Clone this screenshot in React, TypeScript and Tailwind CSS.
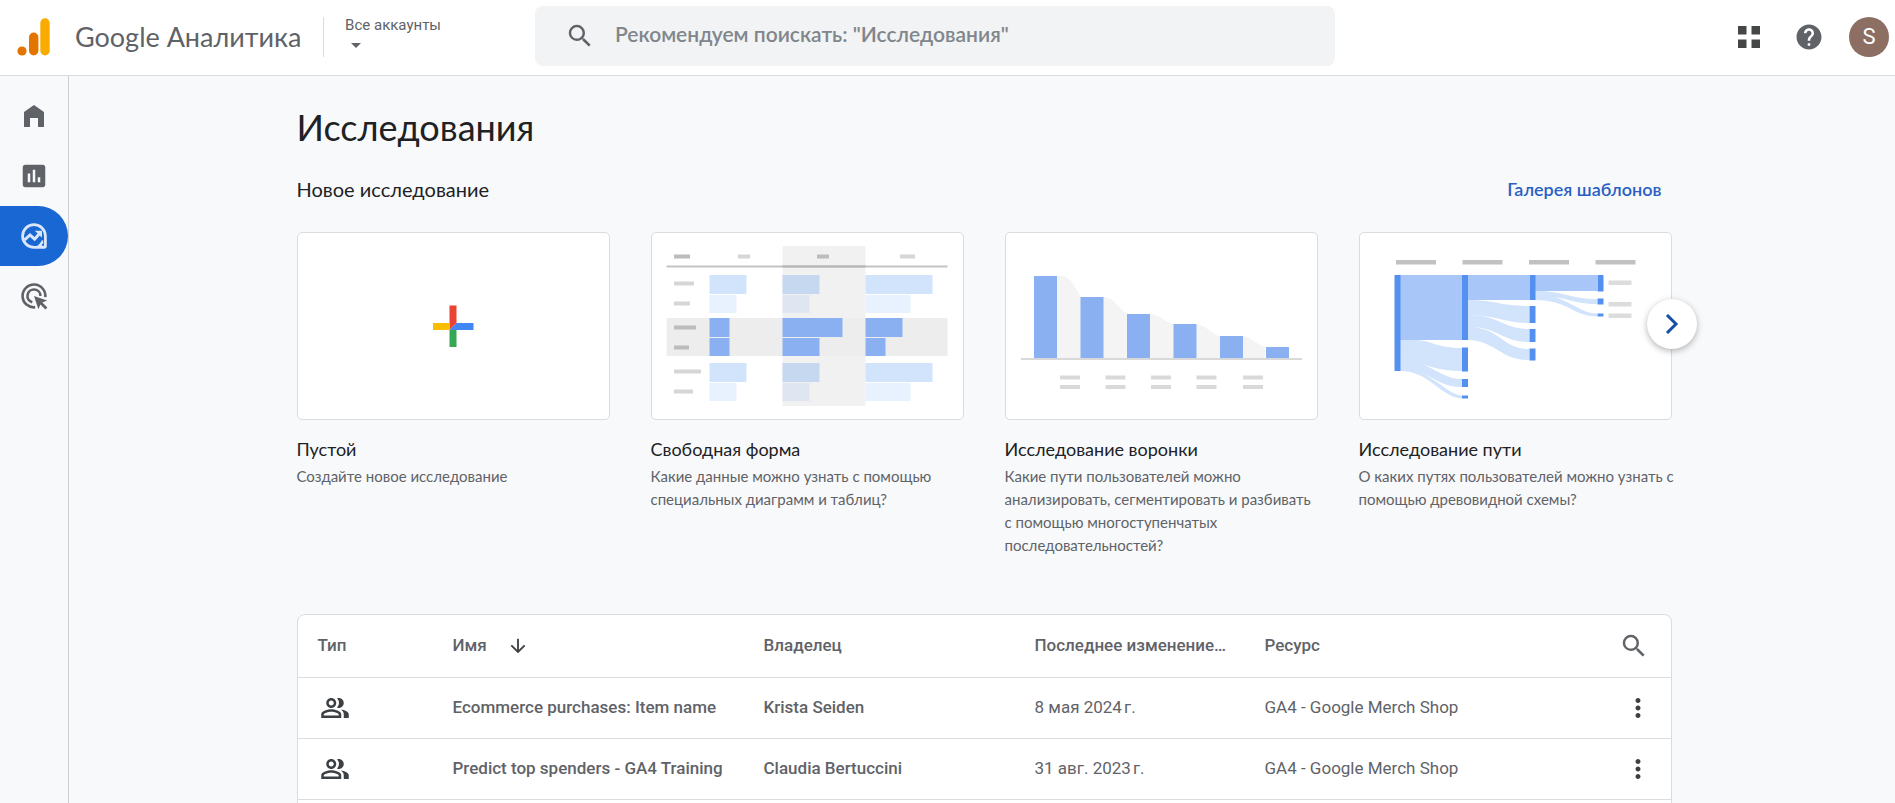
import React from "react";
import {
  MdArrowDownward,
  MdArrowDropDown,
  MdHelp,
  MdInsertChart,
  MdMoreVert,
  MdOutlinePeopleAlt,
  MdSearch,
} from "react-icons/md";

function AnalyticsLogo() {
  return (
    <svg width="34" height="38" viewBox="0 0 34 38" aria-hidden="true">
      <circle cx="5" cy="33" r="4.6" fill="#e37400" />
      <rect x="12" y="14.5" width="9.4" height="23" rx="4.7" fill="#e37400" />
      <rect x="23.3" y="0.3" width="9.4" height="37.2" rx="4.7" fill="#f9ab00" />
    </svg>
  );
}

function HomeIcon() {
  return (
    <svg width="30" height="30" viewBox="0 0 30 30" fill="currentColor" aria-hidden="true">
      <path d="M5 11 15 4l10 7v15h-6v-9h-8v9H5z" />
    </svg>
  );
}

function ExploreIcon() {
  return (
    <svg width="30" height="30" viewBox="0 0 30 30" fill="none" stroke="currentColor" aria-hidden="true">
      <path d="M15 3.600a11.400 11.400 0 1 0 0 22.800h10.200a1.200 1.200 0 0 0 1.200-1.200V15A11.400 11.400 0 0 0 15 3.600z" strokeWidth="2.800" />
      <path d="M23.500 19.500v6.500h-6.500c3-1 5.300-3.500 6.500-6.500z" fill="currentColor" strokeWidth="1.500" />
      <circle cx="23.800" cy="23.800" r="1" fill="#1967d2" stroke="none" />
      <path d="m5.500 19 5.500-5 4.600 4.200 5-5.700" strokeWidth="3" />
      <path d="M15.800 9.800h7.200v7z" fill="currentColor" stroke="none" />
    </svg>
  );
}

function AdsIcon() {
  return (
    <svg width="30" height="30" viewBox="0 0 30 30" fill="none" stroke="currentColor" strokeWidth="2.600" aria-hidden="true">
      <path d="M26.300 16.200A11.400 11.400 0 1 0 16.200 26.300" />
      <path d="M21.500 15a6.500 6.500 0 1 0-8.200 6.300" />
      <path d="m15 15 13.200 4.500-4.800 2 5 5-2 2-5-5-2 4.800z" fill="currentColor" stroke="none" />
    </svg>
  );
}

function PlusArt() {
  return (
    <svg viewBox="0 0 311 186" className="block w-full" aria-hidden="true">
      <path d="M151.500 72.500h7V90l-7 7z" fill="#ea4335" />
      <path d="M135 90h16.500v7H135z" fill="#fbbc04" />
      <path d="M151.500 97h7v17h-7z" fill="#34a853" />
      <path d="M158.500 90h17v7h-24z" fill="#4285f4" />
    </svg>
  );
}

function FreeFormArt() {
  return (
    <svg viewBox="0 0 311 186" className="block w-full" aria-hidden="true">
      <path d="M130.500 13h83v160h-83z" fill="#f1f1f1" />
      <path d="M14.500 85h281v38h-281z" fill="#ededed" />
      <path d="M14.500 32.500h281v2h-281z" fill="#c4c4c4" />
      <path d="M130.500 32.500h83v2h-83z" fill="#b5b5b5" />
      <path d="M22 21.500h16v4H22zM165 21.500h12v4h-12zM22 92.500h22v4H22zM22 112.500h15v4H22z" fill="#bcbcbc" />
      <path d="M86 21.500h12v4H86zM248 21.500h15v4h-15zM22 48.500h20v4H22zM22 68.500h16v4H22zM22 136.500h27v4H22zM22 156.500h19v4H22z" fill="#d6d6d6" />
      <path d="M57.500 42h37v19h-37zM213.500 42h67v19h-67zM57.500 130h37v19h-37zM213.500 130h67v19h-67z" fill="#d2e3fc" />
      <path d="M57.500 62h27v18h-27zM213.500 62h45v18h-45zM57.500 150h27v18h-27zM213.500 150h45v18h-45z" fill="#e8f1fe" />
      <path d="M130.500 42h37v19h-37zM130.500 130h37v19h-37z" fill="#c6d7f0" />
      <path d="M130.500 62h27v18h-27zM130.500 150h27v18h-27z" fill="#dfe6f2" />
      <path d="M57.500 85h20v19h-20zM57.500 105h20v18h-20zM130.500 85h60v19h-60zM130.500 105h37v18h-37zM213.500 85h37v19h-37zM213.500 105h20v18h-20z" fill="#8ab0f2" />
    </svg>
  );
}

function FunnelArt() {
  return (
    <svg viewBox="0 0 311 186" className="block w-full" aria-hidden="true">
      <path
        d="M51 43h5c8 0 14 12 19 21h22c11 0 14 10 24 17h22c10 0 14 7 24 10h22c11 0 14 9 24 12h22c11 0 14 8 24 11v12H51z"
        fill="#f4f4f4"
      />
      <path d="M28 43h23v82H28zM74.500 64h23v61h-23zM121 81h23v44h-23zM167.500 91h23v34h-23zM214 103h23v22h-23zM260 114h23v11h-23z" fill="#8ab0f2" />
      <path d="M15 125h281v2H15z" fill="#d9d9d9" />
      <path d="M54 142.500h20v4H54zM99.500 142.500h20v4h-20zM145 142.500h20v4h-20zM190.500 142.500h20v4h-20zM237 142.500h20v4h-20zM54 152h20v4H54zM99.500 152h20v4h-20zM145 152h20v4h-20zM190.500 152h20v4h-20zM237 152h20v4h-20z" fill="#d9d9d9" />
    </svg>
  );
}

function PathArt() {
  return (
    <svg viewBox="0 0 311 186" className="block w-full" aria-hidden="true">
      <path d="M40 107h16c18 1 20 8 46 8v23c-22 0-28-4-42-7 16 4 24 15 42 15v8c-22 0-28-11-42-14 17 5 27 21 42 22.500v3C80 164 70 138 40 138z" fill="#d2e3fc" />
      <path d="M108 67c28 0 32 6 61 6v17c-24 0-33-8-61-8 32 0 34 14 61 14v13c-27 0-30-15-61-15 32 0 34 22 61 22v11c-29 0-33-19-61-20z" fill="#d2e3fc" />
      <path d="M175 58c30 0 35 8 62 8v5c-24 0-31-7-50-7.500 20 0 32 17 50 17v3c-24 0-27-16-62-16.500z" fill="#d2e3fc" />
      <path d="M40 42h62v65H40zM108 42h61v25h-61zM175 42h62v16h-62z" fill="#a8c6f8" />
      <path d="M34.500 42h6v96h-6zM102 42h6v65h-6zM102 114.500h6v24h-6zM102 146h6v8h-6zM102 162.500h6v3h-6zM169.500 42h6v25h-6zM169.500 73h6v17h-6zM169.500 96h6v13h-6zM169.500 115.500h6v12h-6zM237.500 42h6v16.500h-6zM237.500 65.500h6v6h-6zM237.500 80.500h6v3h-6z" fill="#5390f0" />
      <path d="M36 27h40v4.500H36zM102.500 27h40v4.500h-40zM169 27h40v4.500h-40zM235.500 27h40v4.500h-40z" fill="#c1c1c1" />
      <path d="M248.500 47.500h23v4.500h-23zM248.500 69h23v4.500h-23zM248.500 80.500h23v4.500h-23z" fill="#dcdcdc" />
    </svg>
  );
}

const templates = [
  { title: "Пустой", text: "Создайте новое исследование", Art: PlusArt },
  {
    title: "Свободная форма",
    text: "Какие данные можно узнать с помощью специальных диаграмм и таблиц?",
    Art: FreeFormArt,
  },
  {
    title: "Исследование воронки",
    text: "Какие пути пользователей можно\nанализировать, сегментировать и разбивать\nс помощью многоступенчатых последовательностей?",
    Art: FunnelArt,
  },
  {
    title: "Исследование пути",
    text: "О каких путях пользователей можно узнать с\nпомощью древовидной схемы?",
    Art: PathArt,
  },
];

const rows = [
  { name: "Ecommerce purchases: Item name", owner: "Krista Seiden", date: "8 мая 2024\u202fг.", property: "GA4 - Google Merch Shop" },
  { name: "Predict top spenders - GA4 Training", owner: "Claudia Bertuccini", date: "31 авг. 2023\u202fг.", property: "GA4 - Google Merch Shop" },
];

const nav = [
  { label: "Главная", Icon: HomeIcon, active: false },
  { label: "Отчеты", Icon: MdInsertChart, active: false },
  { label: "Исследования", Icon: ExploreIcon, active: true },
  { label: "Реклама", Icon: AdsIcon, active: false },
];

export default function App() {
  return (
    <div className="flex h-screen flex-col overflow-hidden bg-[#f8f9fb] font-['Roboto',sans-serif] text-[#5f6368]">
      <header className="flex h-[76px] shrink-0 items-center border-b border-[#dadce0] bg-white pb-0.5 pr-1.5">
        <div className="flex w-[535px] shrink-0 items-center">
          <a href="#" className="flex items-center pl-[17px]">
            <AnalyticsLogo />
            <span className="pl-6 font-['Lato',sans-serif] text-[27px] leading-8">Google Аналитика</span>
          </a>
          <button type="button" className="ml-auto mr-[94px] flex h-10 flex-col items-start justify-start border-l border-[#dadce0] pl-[21px] text-[15px] leading-4">
            <span>Все аккаунты</span>
            <MdArrowDropDown size={30} className="-ml-1" />
          </button>
        </div>
        <label className="mb-0.5 flex h-[60px] w-[800px] min-w-0 items-center rounded-lg bg-[#f1f3f4] pl-[30px]">
          <MdSearch size={30} className="shrink-0" />
          <input
            type="search"
            aria-label="Поиск"
            placeholder={'Рекомендуем поискать: "Исследования"'}
            className="ml-5 w-full bg-transparent pb-1 font-['Lato',sans-serif] text-[21px] font-semibold outline-none placeholder:text-[#80868b]"
          />
        </label>
        <div className="ml-auto flex items-center">
          <button type="button" aria-label="Приложения" className="flex size-[60px] items-center justify-center text-[#444746]">
            <svg width="22" height="22" viewBox="0 0 22 22" fill="currentColor" aria-hidden="true">
              <path d="M0 0h8.500v8.500H0zM13.500 0H22v8.500h-8.500zM0 13.500h8.500V22H0zM13.500 13.500H22V22h-8.500z" />
            </svg>
          </button>
          <button type="button" aria-label="Справка" className="flex size-[60px] items-center justify-center">
            <MdHelp size={30} />
          </button>
          <button type="button" aria-label="Аккаунт" className="ml-2.5 flex size-10 items-center justify-center rounded-full bg-[#8d6e63] text-[22px] text-white">
            S
          </button>
        </div>
      </header>

      <div className="flex min-h-0 flex-1">
        <nav className="w-[69px] shrink-0 border-r border-[#cdcfd2] pt-2.5">
          {nav.map(({ label, Icon, active }) => (
            <a
              key={label}
              href="#"
              aria-label={label}
              className={
                active
                  ? "flex h-[60px] items-center justify-center rounded-r-full bg-[#1967d2] text-[#d9e6fa]"
                  : "flex h-[60px] items-center justify-center"
              }
            >
              <Icon size={30} />
            </a>
          ))}
        </nav>

        <main className="min-w-0 flex-1 pl-1 pt-[27px]">
          <div className="mx-auto max-w-[1375px]">
            <h1 className="font-['Lato',sans-serif] text-[36px] leading-[48px] text-[#202124]">Исследования</h1>
            <div className="mt-6 flex items-center justify-between pr-2.5 font-['Lato',sans-serif] leading-7">
              <h2 className="text-[20px] text-[#202124]">Новое исследование</h2>
              <a href="#" className="text-[18px] font-semibold text-[#2a5fc4]">Галерея шаблонов</a>
            </div>

            <section className="relative mt-[29px] grid h-[382px] grid-cols-4 content-start gap-[41px]">
              {templates.map(({ title, text, Art }) => (
                <a key={title} href="#" className="font-['Lato',sans-serif]">
                  <div className="overflow-hidden rounded-[5px] border border-[#dadce0] bg-white">
                    <Art />
                  </div>
                  <h3 className="mt-[17px] text-[18px] leading-6 text-[#202124]">{title}</h3>
                  <p className="-mr-3 mt-1 whitespace-pre-line text-[15px] leading-[23px]">{text}</p>
                </a>
              ))}
              <button
                type="button"
                aria-label="Далее"
                className="absolute -right-[25px] top-[67px] flex size-[50px] items-center justify-center rounded-full bg-white text-[#174ea6] shadow-[0_2px_6px_rgba(60,64,67,0.4)]"
              >
                <svg width="14" height="22" viewBox="0 0 14 22" fill="none" stroke="currentColor" strokeWidth="3" aria-hidden="true">
                  <path d="m2 2 9 9-9 9" />
                </svg>
              </button>
            </section>

            <div className="rounded-lg border border-[#dadce0] bg-white pb-16">
              <table className="w-full table-fixed text-left text-[17px]">
                <colgroup>
                  <col className="w-[155px]" />
                  <col className="w-[311px]" />
                  <col className="w-[271px]" />
                  <col className="w-[230px]" />
                  <col />
                  <col className="w-[60px]" />
                </colgroup>
                <thead>
                  <tr className="h-[62px] border-b border-[#dadce0]">
                    <th scope="col" className="pl-5 font-medium">Тип</th>
                    <th scope="col" className="font-medium">
                      <button type="button" className="flex items-center gap-5">
                        Имя
                        <MdArrowDownward size={22} className="text-[#3c4043]" />
                      </button>
                    </th>
                    <th scope="col" className="font-medium">Владелец</th>
                    <th scope="col" className="font-medium">Последнее изменение…</th>
                    <th scope="col" className="font-medium">Ресурс</th>
                    <th scope="col">
                      <button type="button" aria-label="Поиск по таблице" className="flex pl-2">
                        <MdSearch size={30} />
                      </button>
                    </th>
                  </tr>
                </thead>
                <tbody>
                  {rows.map((row) => (
                    <tr key={row.name} className="h-[61px] border-b border-[#dadce0]">
                      <td className="pl-[22px] text-[#3c4043]">
                        <MdOutlinePeopleAlt size={30} aria-label="Общий доступ" />
                      </td>
                      <td className="truncate font-medium">{row.name}</td>
                      <td className="font-medium">{row.owner}</td>
                      <td>{row.date}</td>
                      <td>{row.property}</td>
                      <td>
                        <button type="button" aria-label="Действия" className="flex pl-3 text-[#3c4043]">
                          <MdMoreVert size={30} />
                        </button>
                      </td>
                    </tr>
                  ))}
                </tbody>
              </table>
            </div>
          </div>
        </main>
      </div>
    </div>
  );
}
